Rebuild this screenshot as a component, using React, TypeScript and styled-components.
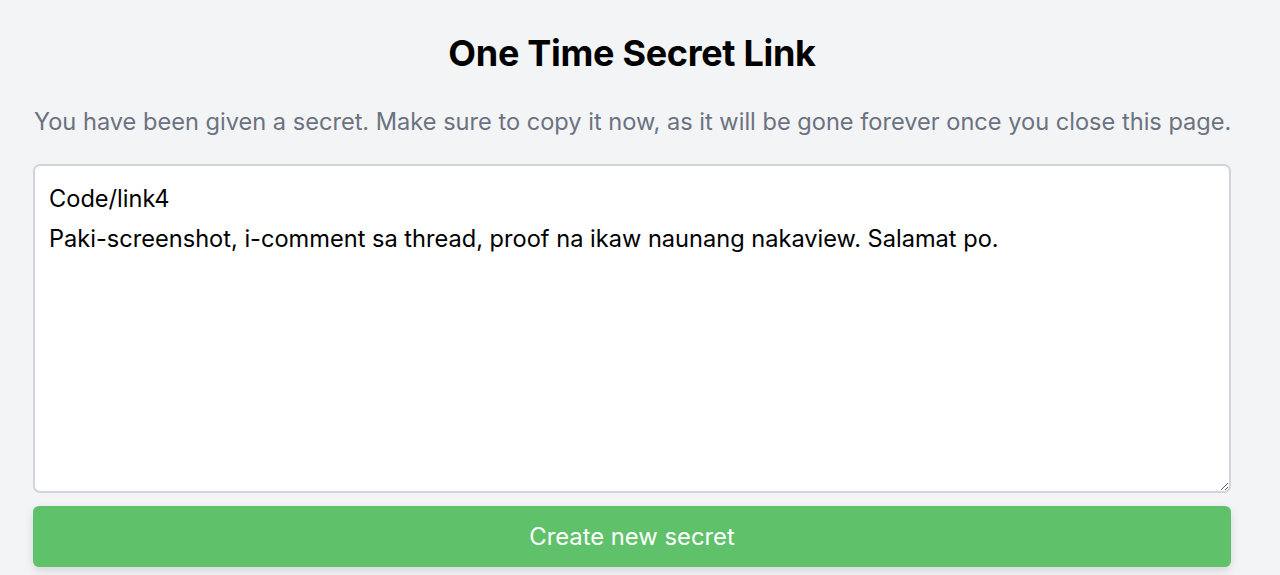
import styled, { createGlobalStyle } from 'styled-components';

const GlobalStyle = createGlobalStyle`
	html, body {
		margin: 0;
		padding: 0;
		background: #f3f4f6;
	}

	body {
		font-family: Inter, 'Liberation Sans', sans-serif;
		color: #111827;
	}
`;

const Page = styled.main`
	display: flex;
	flex-direction: column;
	padding: 30px 49px 0 33px;
	height: 575px;
	box-sizing: border-box;
`;

const Title = styled.h1`
	margin: 0;
	text-align: center;
	font-size: 36px;
	font-weight: 700;
	line-height: 46px;
	color: #000;
	letter-spacing: -0.3px;
`;

const Subtitle = styled.p`
	margin: 30px 0 0 1px;
	font-size: 23.6px;
	line-height: 32px;
	color: #6b7280;
	white-space: nowrap;
`;

const SecretBox = styled.textarea`
	margin-top: 26px;
	height: 329px;
	box-sizing: border-box;
	padding: 13px 14px;
	border: 2px solid #d1d5db;
	border-radius: 7px;
	background: #fff;
	font-family: Inter, 'Liberation Sans', sans-serif;
	font-size: 23.6px;
	line-height: 40px;
	color: #000;
	outline: none;
	resize: vertical;
`;

const CreateButton = styled.button`
	margin-top: 13px;
	height: 61px;
	border: none;
	border-radius: 6px;
	background: #5fc16a;
	color: #fff;
	font-family: Inter, 'Liberation Sans', sans-serif;
	font-size: 23.8px;
	cursor: pointer;
	box-shadow: 0 4px 10px rgba(0, 0, 0, 0.12);
`;

const secret = 'Code/link4\nPaki-screenshot, i-comment sa thread, proof na ikaw naunang nakaview. Salamat po.';

const App = function () {
	return (
		<>
			<GlobalStyle />
			<Page>
				<Title>One Time Secret Link</Title>
				<Subtitle>
					You have been given a secret. Make sure to copy it now, as it will be gone forever once you close this page.
				</Subtitle>
				<SecretBox readOnly defaultValue={secret} spellCheck={false} />
				<CreateButton>Create new secret</CreateButton>
			</Page>
		</>
	);
};

export default App;
